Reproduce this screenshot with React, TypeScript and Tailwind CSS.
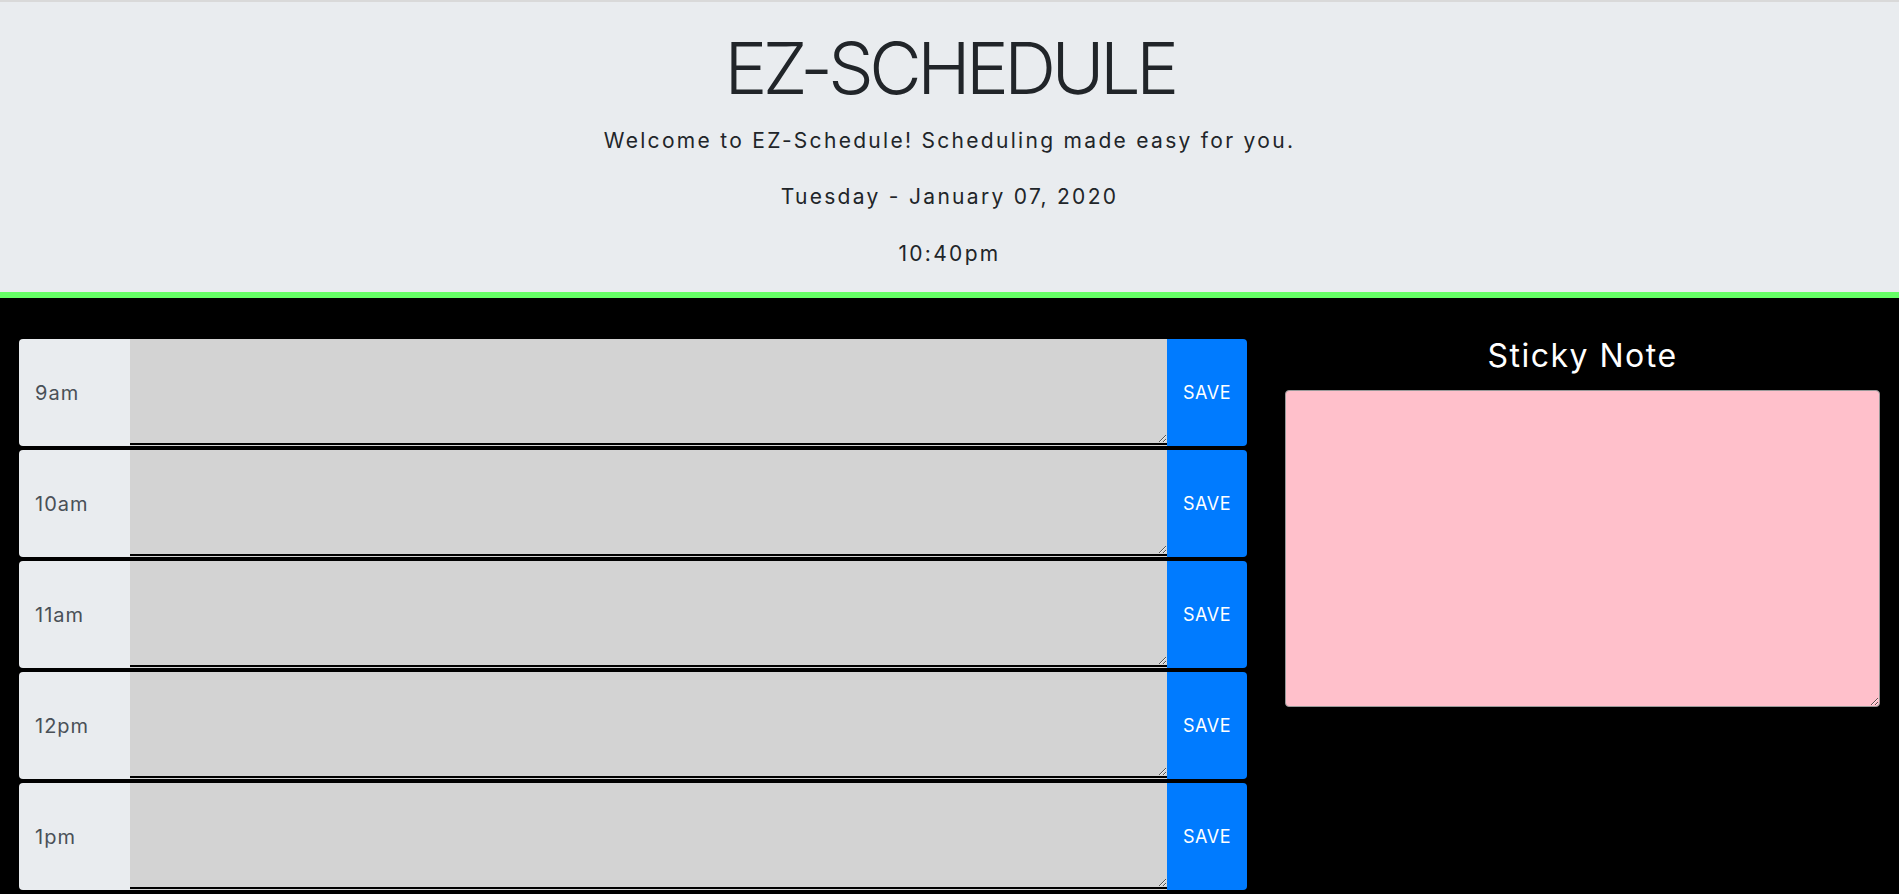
import React, { useState } from 'react';

const hours = ['9am', '10am', '11am', '12pm', '1pm'];

const font = { fontFamily: 'Inter, "Noto Sans", sans-serif' };

const HourRow: React.FC<{ hour: string }> = ({ hour }) => {
  const [text, setText] = useState('');

  return (
    <div className="flex h-[107px]">
      <div className="w-[111px] shrink-0 flex items-center pl-4 bg-[#e9ecef] rounded-l text-[20px] tracking-[1px] text-[#495057]">
        {hour}
      </div>
      <div className="flex-1 pb-px bg-[#d3d3d3]">
        <textarea
          value={text}
          onChange={(e) => setText(e.target.value)}
          className="block w-full h-full bg-[#d3d3d3] border-0 border-b-2 border-black outline-none p-2 text-black"
        />
      </div>
      <button className="w-[80px] shrink-0 bg-[#007bff] rounded-r text-white text-[18px] tracking-[0.5px]">
        SAVE
      </button>
    </div>
  );
};

export default function App() {
  const [note, setNote] = useState('');

  return (
    <div className="min-h-screen bg-black" style={font}>
      {/* Header */}
      <header className="border-t-2 border-[#d9d9d9] bg-[#e9ecef] border-b-[6px] border-b-[#66ff66] text-center text-[#212529] pt-[23px] pb-[23px]">
        <h1 className="text-[72px] font-light leading-[86px] h-[86px] tracking-[-4.5px]">EZ-SCHEDULE</h1>
        <p className="text-[21px] leading-[30px] mt-[15px] tracking-[2.3px]">
          Welcome to EZ-Schedule! Scheduling made easy for you.
        </p>
        <p className="text-[21px] leading-[30px] mt-[26px] tracking-[2.3px]">Tuesday - January 07, 2020</p>
        <p className="text-[21px] leading-[30px] mt-[27px] tracking-[2.3px]">10:40pm</p>
      </header>

      {/* Content */}
      <main className="flex gap-[38px] px-[19px] pt-[41px]">
        <div className="flex-1 flex flex-col gap-1">
          {hours.map((h) => (
            <HourRow key={h} hour={h} />
          ))}
        </div>

        <div className="w-[595px] shrink-0 flex flex-col items-center">
          <h2 className="text-[32px] text-white leading-[38px] mt-[-2px] mb-[15px] tracking-[1.5px]">Sticky Note</h2>
          <textarea
            value={note}
            onChange={(e) => setNote(e.target.value)}
            className="w-full h-[317px] bg-[#ffc0cb] rounded border border-[#999] outline-none p-2"
          />
        </div>
      </main>
    </div>
  );
}
